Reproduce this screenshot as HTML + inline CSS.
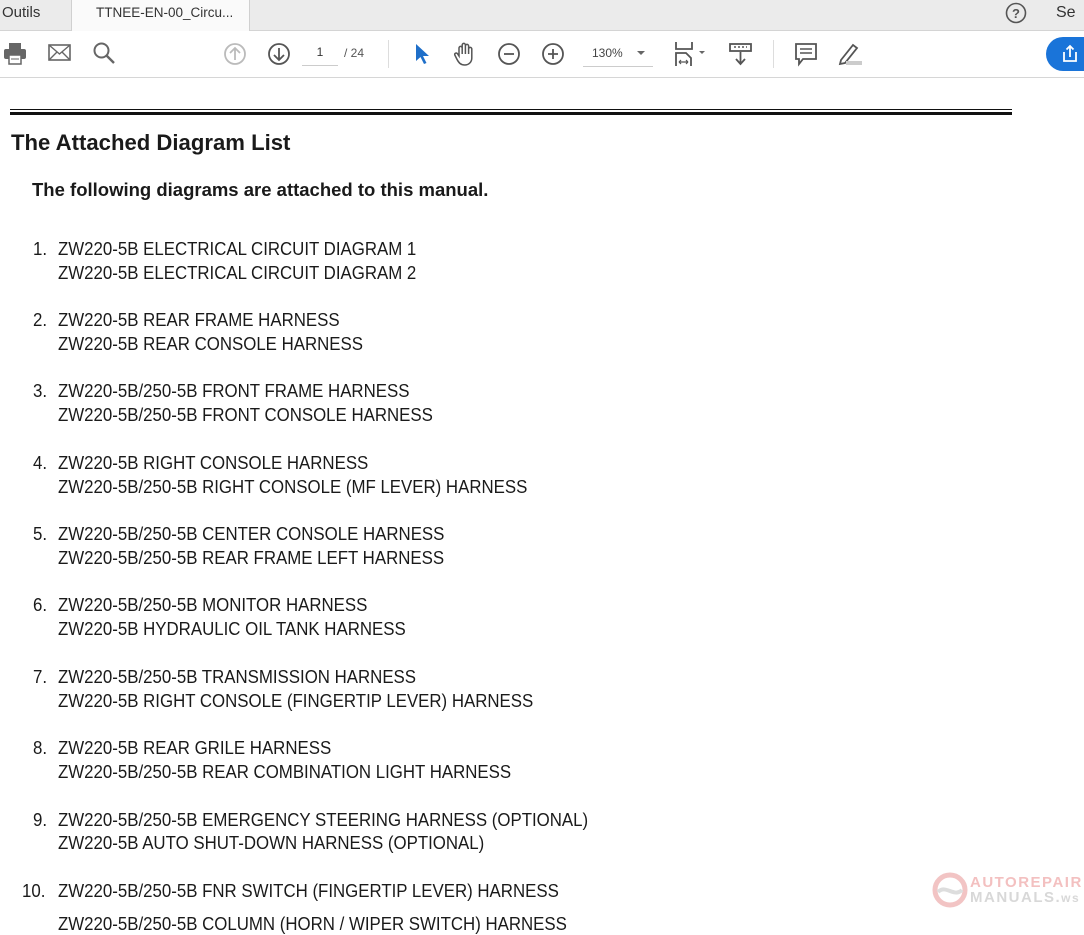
<!DOCTYPE html>
<html><head><meta charset="utf-8"><style>
*{margin:0;padding:0;box-sizing:border-box}
body{width:1084px;height:921px;overflow:hidden;background:#fff;font-family:"Liberation Sans",sans-serif;position:relative;color:#222}
.tabbar{position:absolute;left:0;top:0;width:1084px;height:31px;background:#ebebeb;border-bottom:1px solid #d4d4d4}
.tab{position:absolute;top:0;height:31px;font-size:15px;line-height:26px;color:#333}
.tb{position:absolute;left:0;top:31px;width:1084px;height:47px;background:#fff;border-bottom:1px solid #d6d6d6}
.ic{position:absolute}
.doc{position:absolute;left:0;top:78px;width:1084px;height:843px;background:#fff}
.s{position:absolute;white-space:nowrap;transform-origin:0 0;color:#1a1a1a}
.it{font-size:18.5px;transform:scaleX(0.91)}
</style></head><body>
<div class="tabbar">
 <div class="tab" style="left:0;width:72px;padding-left:2px;border-right:1px solid #d0d0d0">Outils</div>
 <div class="tab" style="left:72px;width:178px;background:#fafafa;border-right:1px solid #d0d0d0;font-size:13.5px;padding-left:24px;">TTNEE-EN-00_Circu... <span style="font-size:12px;margin-left:4px">✕</span></div>
 <svg class="ic" style="left:1005px;top:2px" width="22" height="22"><circle cx="11" cy="11" r="9.5" fill="none" stroke="#555" stroke-width="1.6"/><text x="11" y="16" text-anchor="middle" font-size="13" font-weight="bold" fill="#555" font-family="Liberation Sans">?</text></svg>
 <div class="tab" style="left:1056px;font-size:16px;">Se c</div>
</div>
<div class="tb">
 <svg class="ic" style="left:3px;top:10px" width="24" height="24"><rect x="6" y="2" width="12" height="6" fill="#666"/><rect x="1" y="8" width="22" height="10" rx="2" fill="#666"/><rect x="6" y="14" width="12" height="9" fill="#fff" stroke="#666" stroke-width="1.5"/><line x1="8" y1="18" x2="16" y2="18" stroke="#666"/></svg>
 <svg class="ic" style="left:48px;top:12px" width="24" height="20"><rect x="1" y="2" width="21" height="15" fill="none" stroke="#666" stroke-width="1.6"/><path d="M1 2L11.5 11L22 2M1 17L9 9M22 17L14 9" fill="none" stroke="#666" stroke-width="1.4"/></svg>
 <svg class="ic" style="left:92px;top:10px" width="24" height="24"><circle cx="9.5" cy="9.5" r="7" fill="none" stroke="#666" stroke-width="2"/><line x1="14.5" y1="14.5" x2="22" y2="22" stroke="#666" stroke-width="2.4"/></svg>
 <svg class="ic" style="left:223px;top:11px" width="24" height="24"><circle cx="12" cy="12" r="10" fill="none" stroke="#bbb" stroke-width="1.8"/><path d="M12 18V6M7 11l5-5 5 5" fill="none" stroke="#bbb" stroke-width="1.8"/></svg>
 <svg class="ic" style="left:267px;top:11px" width="24" height="24"><circle cx="12" cy="12" r="10" fill="none" stroke="#555" stroke-width="1.8"/><path d="M12 6v12M7 13l5 5 5-5" fill="none" stroke="#555" stroke-width="1.8"/></svg>
 <div class="ic" style="left:302px;top:14px;width:36px;font-size:12px;text-align:center;color:#333;border-bottom:1px solid #ccc;padding-bottom:6px">1</div>
 <div class="ic" style="left:344px;top:15px;font-size:12px;color:#555">/ 24</div>
 <div class="ic" style="left:388px;top:9px;width:1px;height:28px;background:#ddd"></div>
 <svg class="ic" style="left:413px;top:11px" width="18" height="24"><path d="M3 2L3 19L7.5 15L11 22L13.5 21L10 14L16 14Z" fill="#1f6fc9"/></svg>
 <svg class="ic" style="left:453px;top:10px" width="24" height="26"><path d="M6 15V7a1.6 1.6 0 0 1 3.2 0V13V4a1.6 1.6 0 0 1 3.2 0V13V5a1.6 1.6 0 0 1 3.2 0V13V8a1.6 1.6 0 0 1 3.2 0V17c0 4-3 7-7 7s-6-2-8-6l-2-4a1.5 1.5 0 0 1 2.6-1.4Z" fill="none" stroke="#555" stroke-width="1.5"/></svg>
 <svg class="ic" style="left:497px;top:11px" width="24" height="24"><circle cx="12" cy="12" r="10" fill="none" stroke="#555" stroke-width="1.8"/><line x1="7" y1="12" x2="17" y2="12" stroke="#555" stroke-width="1.8"/></svg>
 <svg class="ic" style="left:541px;top:11px" width="24" height="24"><circle cx="12" cy="12" r="10" fill="none" stroke="#555" stroke-width="1.8"/><path d="M7 12h10M12 7v10" stroke="#555" stroke-width="1.8"/></svg>
 <div class="ic" style="left:583px;top:15px;width:70px;font-size:12px;color:#444;border-bottom:1px solid #ccc;padding:0 0 6px 9px">130%</div>
 <div class="ic" style="left:637px;top:20px;width:0;height:0;border-left:4px solid transparent;border-right:4px solid transparent;border-top:4px solid #666"></div>
 <svg class="ic" style="left:673px;top:9px" width="36" height="28"><path d="M3 2v7h16V2" fill="none" stroke="#555" stroke-width="1.8"/><path d="M3 26V13h10l5 5v8" fill="none" stroke="#555" stroke-width="1.8"/><path d="M6 22h9M6 22l2-2M6 22l2 2M15 22l-2-2M15 22l-2 2" stroke="#555" stroke-width="1.2"/><path d="M26 11l3 3 3-3Z" fill="#666"/></svg>
 <svg class="ic" style="left:728px;top:10px" width="26" height="26"><rect x="2" y="3" width="21" height="7" fill="none" stroke="#555" stroke-width="1.8"/><path d="M6 6h2M10 6h2M14 6h2M18 6h1" stroke="#555" stroke-width="1.4"/><path d="M12.5 11v12M8 18l4.5 5 4.5-5" fill="none" stroke="#555" stroke-width="1.8"/></svg>
 <div class="ic" style="left:773px;top:9px;width:1px;height:28px;background:#ddd"></div>
 <svg class="ic" style="left:794px;top:11px" width="24" height="26"><path d="M2 2h20v15H9l-4 5v-5H2Z" fill="none" stroke="#555" stroke-width="1.8"/><path d="M6 7h12M6 11h12" stroke="#555" stroke-width="1.6"/></svg>
 <svg class="ic" style="left:836px;top:10px" width="28" height="26"><path d="M5 19l12-15 4 3-12 15-5 1Z" fill="none" stroke="#555" stroke-width="1.8"/><rect x="10" y="20" width="16" height="4" fill="#ccc"/></svg>
 <div class="ic" style="left:1046px;top:6px;width:60px;height:34px;border-radius:17px;background:#1a74d9"></div>
 <svg class="ic" style="left:1060px;top:13px" width="20" height="20"><path d="M4 8v9h12V8" fill="none" stroke="#fff" stroke-width="1.8"/><path d="M10 13V2M6.5 5.5L10 2l3.5 3.5" fill="none" stroke="#fff" stroke-width="1.8"/></svg>
</div>
<div class="doc">
 <div style="position:absolute;left:10px;top:31px;width:1002px;height:1px;background:#111"></div>
 <div style="position:absolute;left:10px;top:34px;width:1002px;height:3px;background:#111"></div>
</div>
<div class="s" style="left:11px;top:130px;font-size:22.5px;font-weight:bold;transform:scaleX(0.983)">The Attached Diagram List</div>
<div class="s" style="left:32px;top:179px;font-size:18.5px;font-weight:bold;transform:scaleX(1.0)">The following diagrams are attached to this manual.</div>

<div class="s it" style="left:33px;top:238px">1.</div><div class="s it" style="left:58px;top:238px">ZW220-5B ELECTRICAL CIRCUIT DIAGRAM 1</div><div class="s it" style="left:58px;top:262px">ZW220-5B ELECTRICAL CIRCUIT DIAGRAM 2</div>
<div class="s it" style="left:33px;top:309px">2.</div><div class="s it" style="left:58px;top:309px">ZW220-5B REAR FRAME HARNESS</div><div class="s it" style="left:58px;top:333px">ZW220-5B REAR CONSOLE HARNESS</div>
<div class="s it" style="left:33px;top:380px">3.</div><div class="s it" style="left:58px;top:380px">ZW220-5B/250-5B FRONT FRAME HARNESS</div><div class="s it" style="left:58px;top:404px">ZW220-5B/250-5B FRONT CONSOLE HARNESS</div>
<div class="s it" style="left:33px;top:452px">4.</div><div class="s it" style="left:58px;top:452px">ZW220-5B RIGHT CONSOLE HARNESS</div><div class="s it" style="left:58px;top:476px">ZW220-5B/250-5B RIGHT CONSOLE (MF LEVER) HARNESS</div>
<div class="s it" style="left:33px;top:523px">5.</div><div class="s it" style="left:58px;top:523px">ZW220-5B/250-5B CENTER CONSOLE HARNESS</div><div class="s it" style="left:58px;top:547px">ZW220-5B/250-5B REAR FRAME LEFT HARNESS</div>
<div class="s it" style="left:33px;top:594px">6.</div><div class="s it" style="left:58px;top:594px">ZW220-5B/250-5B MONITOR HARNESS</div><div class="s it" style="left:58px;top:618px">ZW220-5B HYDRAULIC OIL TANK HARNESS</div>
<div class="s it" style="left:33px;top:666px">7.</div><div class="s it" style="left:58px;top:666px">ZW220-5B/250-5B TRANSMISSION HARNESS</div><div class="s it" style="left:58px;top:690px">ZW220-5B RIGHT CONSOLE (FINGERTIP LEVER) HARNESS</div>
<div class="s it" style="left:33px;top:737px">8.</div><div class="s it" style="left:58px;top:737px">ZW220-5B REAR GRILE HARNESS</div><div class="s it" style="left:58px;top:761px">ZW220-5B/250-5B REAR COMBINATION LIGHT HARNESS</div>
<div class="s it" style="left:33px;top:809px">9.</div><div class="s it" style="left:58px;top:809px">ZW220-5B/250-5B EMERGENCY STEERING HARNESS (OPTIONAL)</div><div class="s it" style="left:58px;top:832px">ZW220-5B AUTO SHUT-DOWN HARNESS (OPTIONAL)</div>
<div class="s it" style="left:22px;top:880px">10.</div><div class="s it" style="left:58px;top:880px">ZW220-5B/250-5B FNR SWITCH (FINGERTIP LEVER) HARNESS</div><div class="s it" style="left:58px;top:913px">ZW220-5B/250-5B COLUMN (HORN / WIPER SWITCH) HARNESS</div>

<svg class="ic" style="left:930px;top:872px" width="40" height="36"><circle cx="20" cy="18" r="15" fill="none" stroke="#f2c4c4" stroke-width="5"/><path d="M8 20c8-8 16 6 24-2" fill="none" stroke="#ddd" stroke-width="4"/></svg>
<div class="s" style="left:970px;top:874px;font-size:15px;font-weight:bold;color:#f3c0c0;letter-spacing:1.5px">AUTOREPAIR</div>
<div class="s" style="left:970px;top:889px;font-size:15px;font-weight:bold;color:#d8d8d8;letter-spacing:1.5px">MANUALS.<span style="font-size:12px">ws</span></div>
</body></html>
